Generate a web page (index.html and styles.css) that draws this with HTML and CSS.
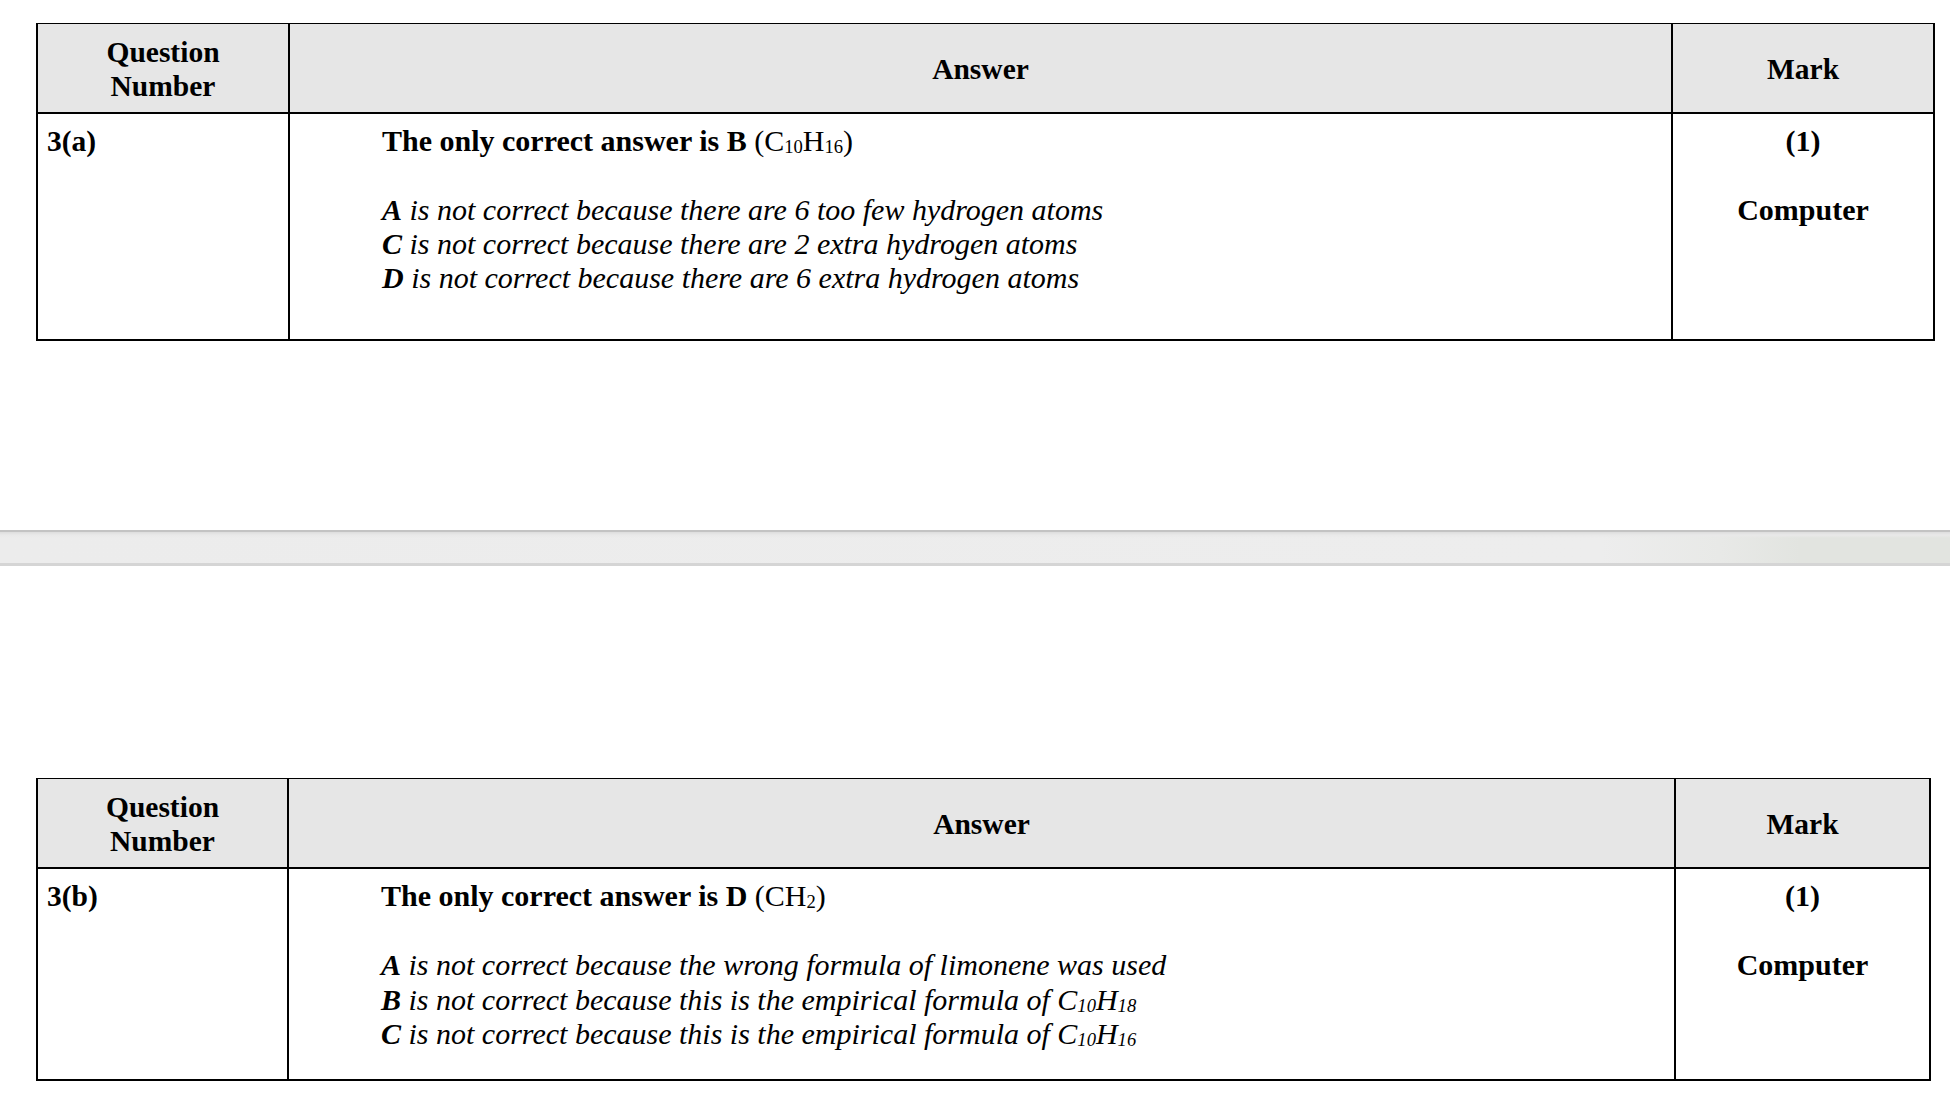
FILE: index.html
```html
<!DOCTYPE html>
<html>
<head>
<meta charset="utf-8">
<link rel="stylesheet" href="styles.css">
</head>
<body>
<section class="page page-first">
  <table class="ms ms-a">
    <colgroup><col class="c1"><col class="c2a"><col class="c3"></colgroup>
    <tr class="head">
      <th>Question<br>Number</th>
      <th>Answer</th>
      <th>Mark</th>
    </tr>
    <tr class="body body-a">
      <td class="qn">3(a)</td>
      <td class="ans">
        <p class="lead"><b>The only correct answer is B</b> (C<span class="sub">10</span>H<span class="sub">16</span>)</p>
        <p class="why"><i><b>A</b> is not correct because there are 6 too few hydrogen atoms</i><br>
        <i><b>C</b> is not correct because there are 2 extra hydrogen atoms</i><br>
        <i><b>D</b> is not correct because there are 6 extra hydrogen atoms</i></p>
      </td>
      <td class="mark"><p class="lead">(1)</p><p>Computer</p></td>
    </tr>
  </table>
</section>
<div class="gap"></div>
<section class="page page-second">
  <table class="ms ms-b">
    <colgroup><col class="c1b"><col class="c2b"><col class="c3b"></colgroup>
    <tr class="head">
      <th>Question<br>Number</th>
      <th>Answer</th>
      <th>Mark</th>
    </tr>
    <tr class="body body-b">
      <td class="qn">3(b)</td>
      <td class="ans">
        <p class="lead"><b>The only correct answer is D</b> (CH<span class="sub">2</span>)</p>
        <p class="why wide"><i><b>A</b> is not correct because the wrong formula of limonene was used</i><br>
        <i><b>B</b> is not correct because this is the empirical formula of C<span class="sub">10</span>H<span class="sub">18</span></i><br>
        <i><b>C</b> is not correct because this is the empirical formula of C<span class="sub">10</span>H<span class="sub">16</span></i></p>
      </td>
      <td class="mark"><p class="lead">(1)</p><p>Computer</p></td>
    </tr>
  </table>
</section>
</body>
</html>
```
FILE: styles.css
```css
html, body {
  margin: 0;
  padding: 0;
  background: #ffffff;
}
body {
  font-family: "Liberation Serif", "Times New Roman", serif;
  font-size: 29.5px;
  line-height: 34px;
  color: #000;
}
.page-first {
  padding: 23px 0 0 36px;
  height: 530px;
  box-sizing: border-box;
}
.page-second {
  padding: 212px 0 0 36px;
}
.gap {
  height: 36px;
  background:
    linear-gradient(to bottom, #c3c3c3 0, #c3c3c3 2px, #dddddd 2px, #e9e9e9 5px, rgba(237,237,237,0) 8px, rgba(237,237,237,0) 33px, #d5d5d5 33px, #d5d5d5 36px),
    linear-gradient(to right, #ececec 0, #ededed 1600px, #e8e9e7 1720px, #e2e4e0 1800px, #e2e4e0 100%);
}
.ms {
  border-collapse: separate;
  border-spacing: 0;
  table-layout: fixed;
  border-top: 1px solid #000;
  border-left: 2px solid #000;
}
.ms-a { width: 1899px; }
.ms-b { width: 1895px; }
.c1 { width: 252px; }
.c3 { width: 262px; }
.c1b { width: 251px; }
.c3b { width: 255px; }
.ms th, .ms td {
  border-right: 2px solid #000;
  border-bottom: 2px solid #000;
  padding: 0;
}
.head th {
  background: #e6e6e6;
  height: 86px;
  padding-top: 2px;
  font-weight: bold;
  text-align: center;
  vertical-align: middle;
}
.body td {
  vertical-align: top;
  padding-top: 10px;
  font-size: 30px;
}
.body-a td { height: 215px; }
.body-b td { height: 200px; }
.qn {
  font-weight: bold;
  padding-left: 9px !important;
  font-size: 29.5px !important;
}
.ans {
  padding-left: 92px !important;
}
.ans p, .mark p {
  margin: 0;
}
.lead {
  margin-bottom: 35px !important;
}
.wide {
  line-height: 34.7px;
}
.mark {
  text-align: center;
  font-weight: bold;
}
.sub {
  font-size: 0.62em;
  vertical-align: -0.12em;
  line-height: 0;
}
```
